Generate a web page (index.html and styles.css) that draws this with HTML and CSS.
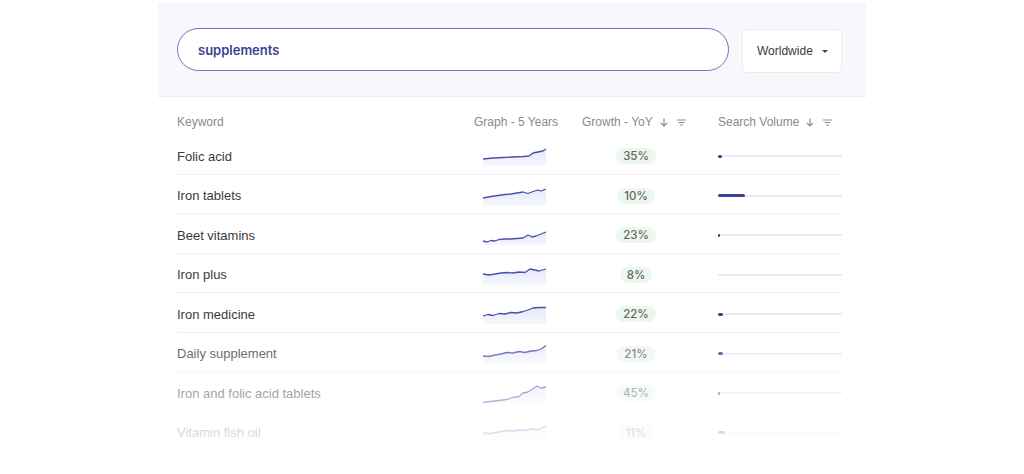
FILE: index.html
```html
<!DOCTYPE html>
<html lang="en">
<head>
<meta charset="utf-8">
<title>Keyword research</title>
<link rel="stylesheet" href="styles.css">
</head>
<body>
<div class="wrap">
  <div class="top">
    <div class="search">supplements</div>
    <div class="region">Worldwide <span class="caret"></span></div>
  </div>
  <div class="table">
    <svg width="0" height="0" class="defs"><defs><linearGradient id="ag" x1="0" y1="0" x2="0" y2="1"><stop offset="0" stop-color="#e6e8f8"/><stop offset="1" stop-color="#f6f7fd"/></linearGradient></defs></svg>
    <div class="row head">
      <div class="c-kw">Keyword</div>
      <div class="c-graph">Graph - 5 Years</div>
      <div class="c-growth">Growth - YoY
        <svg class="ic" width="8" height="9" viewBox="0 0 8 9"><path d="M4 0.5V8M1 5l3 3 3-3" fill="none" stroke="#8d8d8d" stroke-width="1.2"/></svg>
        <svg class="ic filt" width="9" height="7" viewBox="0 0 9 7"><path d="M0 1h9M1.5 3.5h6M3 6h3" stroke="#8d8d8d" stroke-width="1"/></svg>
      </div>
      <div class="c-vol">Search Volume
        <svg class="ic" width="8" height="9" viewBox="0 0 8 9"><path d="M4 0.5V8M1 5l3 3 3-3" fill="none" stroke="#8d8d8d" stroke-width="1.2"/></svg>
        <svg class="ic filt" width="9" height="7" viewBox="0 0 9 7"><path d="M0 1h9M1.5 3.5h6M3 6h3" stroke="#8d8d8d" stroke-width="1"/></svg>
      </div>
    </div>

    <div class="row">
      <div class="c-kw kw">Folic acid</div>
      <div class="c-graph"><svg class="spark" width="64" height="20" viewBox="0 0 64 20"><path class="area" d="M0 13L10 12L20 11.5L30 11L40 10.5L46 10L50 7L55 6L60 5L63 3V20H0Z"/><path class="line" d="M0 13L10 12L20 11.5L30 11L40 10.5L46 10L50 7L55 6L60 5L63 3"/></svg></div>
      <div class="c-growth"><span class="pill">35%</span></div>
      <div class="c-vol"><div class="track"><div class="fill" style="width:4px"></div></div></div>
    </div>

    <div class="row">
      <div class="c-kw kw">Iron tablets</div>
      <div class="c-graph"><svg class="spark" width="64" height="20" viewBox="0 0 64 20"><path class="area" d="M0 12L8 10.5L15 9.5L22 8.5L28 8L34 7L40 6L45 7.5L50 5.5L55 4L58 5L63 3V20H0Z"/><path class="line" d="M0 12L8 10.5L15 9.5L22 8.5L28 8L34 7L40 6L45 7.5L50 5.5L55 4L58 5L63 3"/></svg></div>
      <div class="c-growth"><span class="pill">10%</span></div>
      <div class="c-vol"><div class="track"><div class="fill" style="width:27px"></div></div></div>
    </div>

    <div class="row">
      <div class="c-kw kw">Beet vitamins</div>
      <div class="c-graph"><svg class="spark" width="64" height="20" viewBox="0 0 64 20"><path class="area" d="M0 16L4 17L8 15.5L12 16L16 14.5L22 14L28 14L34 13.5L40 13L45 10L49 12L53 11L58 9L63 7V20H0Z"/><path class="line" d="M0 16L4 17L8 15.5L12 16L16 14.5L22 14L28 14L34 13.5L40 13L45 10L49 12L53 11L58 9L63 7"/></svg></div>
      <div class="c-growth"><span class="pill">23%</span></div>
      <div class="c-vol"><div class="track"><div class="fill" style="width:2px"></div></div></div>
    </div>

    <div class="row">
      <div class="c-kw kw">Iron plus</div>
      <div class="c-graph"><svg class="spark" width="64" height="20" viewBox="0 0 64 20"><path class="area" d="M0 9L6 10L12 9L18 8L24 7.5L30 8L36 7L42 7.5L47 4L52 5L56 6L63 4V20H0Z"/><path class="line" d="M0 9L6 10L12 9L18 8L24 7.5L30 8L36 7L42 7.5L47 4L52 5L56 6L63 4"/></svg></div>
      <div class="c-growth"><span class="pill">8%</span></div>
      <div class="c-vol"><div class="track"><div class="fill" style="width:0px"></div></div></div>
    </div>

    <div class="row">
      <div class="c-kw kw">Iron medicine</div>
      <div class="c-graph"><svg class="spark" width="64" height="20" viewBox="0 0 64 20"><path class="area" d="M0 12L5 10.5L10 11.5L16 9.5L22 10L28 8.5L34 9L40 7.5L45 6L50 4L56 3.5L63 3.5V20H0Z"/><path class="line" d="M0 12L5 10.5L10 11.5L16 9.5L22 10L28 8.5L34 9L40 7.5L45 6L50 4L56 3.5L63 3.5"/></svg></div>
      <div class="c-growth"><span class="pill">22%</span></div>
      <div class="c-vol"><div class="track"><div class="fill" style="width:5px"></div></div></div>
    </div>

    <div class="row">
      <div class="c-kw kw">Daily supplement</div>
      <div class="c-graph"><svg class="spark" width="64" height="20" viewBox="0 0 64 20"><path class="area" d="M0 12L6 12.5L12 11L18 10L24 8.5L30 9L36 7.5L42 8.5L48 7L54 6.5L58 5L63 1.5V20H0Z"/><path class="line" d="M0 12L6 12.5L12 11L18 10L24 8.5L30 9L36 7.5L42 8.5L48 7L54 6.5L58 5L63 1.5"/></svg></div>
      <div class="c-growth"><span class="pill">21%</span></div>
      <div class="c-vol"><div class="track"><div class="fill" style="width:5px"></div></div></div>
    </div>

    <div class="row">
      <div class="c-kw kw">Iron and folic acid tablets</div>
      <div class="c-graph"><svg class="spark" width="64" height="20" viewBox="0 0 64 20"><path class="area" d="M0 19.5L8 18.5L16 17.5L24 16.5L30 14.5L36 13.5L40 10L45 9L48 7L54 3L58 5L63 4V20H0Z"/><path class="line" d="M0 19.5L8 18.5L16 17.5L24 16.5L30 14.5L36 13.5L40 10L45 9L48 7L54 3L58 5L63 4"/></svg></div>
      <div class="c-growth"><span class="pill">45%</span></div>
      <div class="c-vol"><div class="track"><div class="fill" style="width:2px"></div></div></div>
    </div>

    <div class="row">
      <div class="c-kw kw">Vitamin fish oil</div>
      <div class="c-graph"><svg class="spark" width="64" height="20" viewBox="0 0 64 20"><path class="area" d="M0 10L8 10.5L16 9L24 7.5L30 8L36 7L42 7.5L48 6L54 7L63 3V20H0Z"/><path class="line" d="M0 10L8 10.5L16 9L24 7.5L30 8L36 7L42 7.5L48 6L54 7L63 3"/></svg></div>
      <div class="c-growth"><span class="pill">11%</span></div>
      <div class="c-vol"><div class="track"><div class="fill" style="width:7px"></div></div></div>
    </div>
  </div>
</div>
</body>
</html>
```
FILE: styles.css
```css
html, body {
  margin: 0;
  padding: 0;
  background: #ffffff;
  overflow: hidden;
}
body {
  font-family: "Liberation Sans", Arial, sans-serif;
  color: #333;
}
.wrap {
  width: 708px;
  margin: 3px auto 0;
}
.top {
  height: 94px;
  box-sizing: border-box;
  background: #f8f8fc;
  border-bottom: 1px solid #ececf1;
  display: flex;
  align-items: flex-start;
  padding: 25px 24px 0 19px;
  gap: 13px;
}
.search {
  flex: 1;
  height: 43px;
  box-sizing: border-box;
  border: 1.5px solid #6d74c8;
  border-radius: 22px;
  background: #fff;
  display: flex;
  align-items: center;
  padding-left: 20px;
  font-family: Inter, "Liberation Sans", sans-serif;
  font-weight: 600;
  font-size: 13px;
  color: #3c4196;
}
.region {
  width: 100px;
  height: 44px;
  margin-top: 1px;
  box-sizing: border-box;
  background: #fff;
  border: 1px solid #ebebf0;
  border-radius: 4px;
  display: flex;
  align-items: center;
  padding-left: 14px;
  font-size: 12px;
  color: #3a3a3a;
}
.caret {
  width: 0;
  height: 0;
  border-left: 3px solid transparent;
  border-right: 3px solid transparent;
  border-top: 3.5px solid #444;
  margin-left: 9px;
  margin-top: 1px;
}
.table {
  position: relative;
  padding: 0 24px 0 19px;
}
.defs {
  position: absolute;
}
.table::after {
  content: "";
  position: absolute;
  left: 0;
  right: 0;
  top: 0;
  height: 376px;
  background: linear-gradient(to bottom, rgba(255,255,255,0) 0px, rgba(255,255,255,0) 222px, rgba(255,255,255,0.8) 336px, rgba(255,255,255,1) 366px);
  pointer-events: none;
}
.row {
  display: grid;
  grid-template-columns: 297px 108px 136px 124px;
  align-items: center;
  height: 39.5px;
  box-sizing: border-box;
  padding-top: 4px;
  border-bottom: 1px solid #f0f0f3;
}
.row.head {
  height: 38px;
  align-items: start;
  padding-top: 19px;
  border-bottom: none;
  font-size: 12px;
  color: #8a8a8a;
  line-height: 13px;
}
.head .c-growth, .head .c-vol {
  display: flex;
  align-items: center;
}
.ic {
  margin-left: 7px;
}
.ic.filt {
  margin-left: 9px;
}
.kw {
  font-size: 13px;
  color: #3a3a3a;
}
.c-graph .spark {
  display: block;
  margin-left: 9px;
  overflow: visible;
}
.spark .line {
  fill: none;
  stroke: #4a50ae;
  stroke-width: 1.3;
  stroke-linejoin: round;
}
.spark .area {
  fill: url(#ag);
}
.row .c-growth {
  width: 108px;
  display: flex;
  justify-content: center;
}
.row.head .c-growth {
  justify-content: flex-start;
}
.pill {
  display: inline-block;
  height: 16px;
  line-height: 16px;
  padding: 0 7px;
  border-radius: 8px;
  background: #ecf7ee;
  font-family: Inter, "Liberation Sans", sans-serif;
  font-size: 11.5px;
  font-weight: 500;
  color: #666;
}
.track {
  height: 2px;
  background: #e7e9f7;
  border-radius: 1px;
  position: relative;
  display: flex;
  align-items: center;
}
.fill {
  height: 3px;
  border-radius: 2px;
  background: #3b3f9e;
}
```
